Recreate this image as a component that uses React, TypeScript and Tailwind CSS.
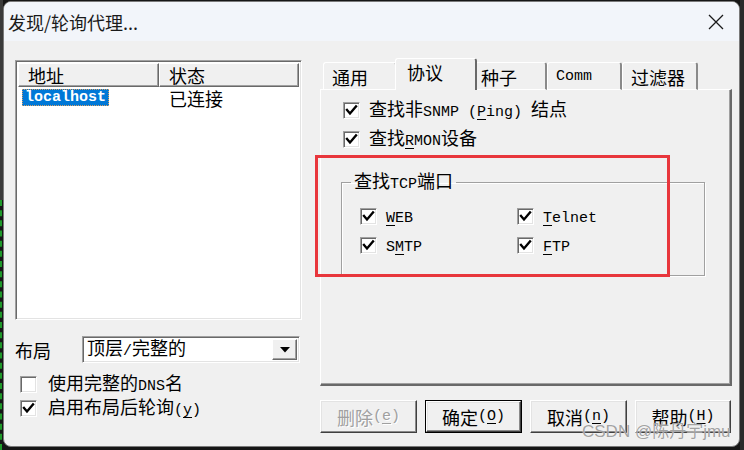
import React from "react";

const cjk = "font-['Noto_Sans_CJK_SC',sans-serif]";
const mono = "font-['Liberation_Mono',monospace] text-[15px]";

const raised =
  "border border-t-white border-l-white border-r-[#696969] border-b-[#696969] shadow-[inset_-1px_-1px_0_#a0a0a0]";
const sunken =
  "border border-t-[#a0a0a0] border-l-[#a0a0a0] border-r-white border-b-white shadow-[inset_1px_1px_0_#696969,inset_-1px_-1px_0_#e3e3e3]";

function M({ children }: { children: React.ReactNode }) {
  return <span className={mono}>{children}</span>;
}
function U({ children }: { children: React.ReactNode }) {
  return <span className="underline underline-offset-[3px] decoration-1">{children}</span>;
}

function Check({ checked }: { checked: boolean }) {
  return (
    <div className={`w-[17px] h-[17px] shrink-0 bg-white flex items-center justify-center ${sunken}`}>
      {checked && (
        <svg width="13" height="13" viewBox="0 0 13 13">
          <polyline points="2,6 5,9.5 11,2.5" fill="none" stroke="#000" strokeWidth="2.4" strokeLinecap="square" />
        </svg>
      )}
    </div>
  );
}

function CheckRow({ checked, children, gap = "gap-[9px]" }: { checked: boolean; children: React.ReactNode; gap?: string }) {
  return (
    <div className={`flex items-center h-[17px] ${gap}`}>
      <Check checked={checked} />
      <span className="text-[18px] leading-[20px] text-black whitespace-nowrap">{children}</span>
    </div>
  );
}

function Tab({ label, active, pl = "pl-[8px]" }: { label: React.ReactNode; active?: boolean; pl?: string }) {
  if (active) {
    return (
      <div className="relative z-10 -mx-[2px] w-[82px] h-[32px] bg-[#f0f0f0] border-t border-l border-t-white border-l-white border-r-2 border-r-[#696969] rounded-t-[3px] flex justify-start pl-[11px] pt-[2px] text-[18px] leading-[22px]">
        {label}
      </div>
    );
  }
  return (
    <div className={`h-[28px] bg-[#f0f0f0] border-t border-l border-b border-t-white border-l-white border-b-white border-r-2 border-r-[#8a8a8a] rounded-t-[3px] flex justify-start ${pl} pt-[3px] text-[18px] leading-[22px]`}>
      {label}
    </div>
  );
}

function Btn({ children, def, disabled, w = "w-[97px]" }: { children: React.ReactNode; def?: boolean; disabled?: boolean; w?: string }) {
  const inner = (
    <div
      className={`flex-1 h-full flex items-center justify-center border border-t-white border-l-white border-r-[#404040] border-b-[#404040] shadow-[inset_-1px_-1px_0_#8a8a8a,inset_1px_1px_0_#e3e3e3] text-[18px] leading-[22px] ${
        disabled ? "text-[#a0a0a0] [text-shadow:1px_1px_0_#fff]" : "text-black"
      }`}
    >
      {children}
    </div>
  );
  return <div className={`${w} h-[33px] flex ${def ? "border border-black" : ""}`}>{inner}</div>;
}

export default function App() {
  return (
    <div className={`relative w-[744px] h-[450px] bg-[#161616] flex overflow-hidden ${cjk}`}>
      {/* desktop sliver at left */}
      <div className="w-[3px] h-full flex flex-col">
        <div className="h-[200px] bg-[#3a3a3a]" />
        <div className="flex-1 border-l-2 border-dashed border-[#1f9a2a]" />
      </div>

      {/* window */}
      <div className="mt-[1px] w-[737px] h-[446px] rounded-[8px] border border-[#7a7a7a] bg-[#f0f0f0] flex flex-col overflow-hidden">
        {/* title bar */}
        <div className="h-[39px] shrink-0 bg-[#f2f5fa] flex items-center justify-between">
          <span className="pl-[4px] text-[18px] leading-[22px] text-[#1a1a1a]">发现/轮询代理...</span>
          <div className="w-[46px] h-full flex items-center justify-center">
            <svg width="16" height="16" viewBox="0 0 16 16">
              <path d="M1 1 L15 15 M15 1 L1 15" stroke="#1a1a1a" strokeWidth="1.3" />
            </svg>
          </div>
        </div>

        {/* body */}
        <div className="flex-1 flex text-black">
          {/* left column */}
          <div className="pl-[11px] pt-[19px] w-[298px] shrink-0 flex flex-col">
            <div className={`w-[287px] h-[260px] bg-white p-[2px] flex flex-col ${sunken}`}>
              <div className="flex h-[24px] shrink-0">
                <div className={`w-[141px] bg-[#f0f0f0] pl-[9px] text-[18px] leading-[22px] ${raised}`}>地址</div>
                <div className={`flex-1 bg-[#f0f0f0] pl-[9px] text-[18px] leading-[22px] ${raised}`}>状态</div>
              </div>
              <div className="flex h-[19px] mt-[1px] items-center">
                <div className="w-[141px] pl-[4px] flex">
                  <span className={`${mono} font-bold leading-[15px] bg-[#0078d7] text-white px-[2px] border border-dotted border-[#d9a066]`}>
                    localhost
                  </span>
                </div>
                <div className="pl-[10px] text-[18px] leading-[20px]">已连接</div>
              </div>
            </div>

            <div className="mt-[16px] h-[27px] flex items-center">
              <span className="w-[67px] text-[18px] leading-[22px]">布局</span>
              <div className={`w-[218px] h-[27px] bg-white flex items-center p-[2px] ${sunken}`}>
                <span className="flex-1 pl-[2px] text-[18px] leading-[22px]">
                  顶层<M>/</M>完整的
                </span>
                <div className={`w-[25px] h-full bg-[#f0f0f0] flex items-center justify-center ${raised}`}>
                  <svg width="10" height="6" viewBox="0 0 10 6">
                    <path d="M0 0 L10 0 L5 5.5 Z" fill="#000" />
                  </svg>
                </div>
              </div>
            </div>

            <div className="mt-[13px] pl-[5px] flex flex-col gap-[7px]">
              <CheckRow checked={false} gap="gap-[11px]">
                使用完整的<M>DNS</M>名
              </CheckRow>
              <CheckRow checked={true} gap="gap-[11px]">
                启用布局后轮询<M>(<U>y</U>)</M>
              </CheckRow>
            </div>
          </div>

          {/* right column */}
          <div className="ml-[18px] pt-[17px] w-[412px] shrink-0 flex flex-col">
            <div className="relative z-10 h-[32px] -mb-[1px] flex items-end pl-[3px]">
              <div className="w-[74px]">
                <Tab label="通用" />
              </div>
              <Tab label="协议" active />
              <div className="w-[72px]">
                <Tab label="种子" pl="pl-[5px]" />
              </div>
              <div className="w-[75px]">
                <Tab label={<span className="text-[15px] font-['Liberation_Mono',monospace] leading-[22px]">Comm</span>} />
              </div>
              <div className="w-[76px]">
                <Tab label="过滤器" />
              </div>
            </div>

            <div className="h-[297px] border-t border-l border-t-white border-l-white border-r-2 border-b-2 border-r-[#696969] border-b-[#696969] shadow-[inset_-1px_-1px_0_#a0a0a0] pt-[12px] pl-[20px] flex flex-col">
              <div className="ml-[2px] flex flex-col gap-[12px]">
                <CheckRow checked>
                  查找非<M>SNMP (<U>P</U>ing) </M>结点
                </CheckRow>
                <CheckRow checked>
                  查找<M>
                    <U>R</U>MON
                  </M>
                  设备
                </CheckRow>
              </div>

              <fieldset className="mt-[20px] w-[364px] border border-[#a0a0a0] shadow-[inset_1px_1px_0_#fff,1px_1px_0_#fff] px-0 pb-[21px]">
                <legend className="ml-[9px] px-[3px] text-[18px] leading-[24px]">
                  查找<M>TCP</M>端口
                </legend>
                <div className="pt-[11px] pl-[18px] grid grid-cols-[157px_1fr] gap-y-[12px]">
                  <CheckRow checked>
                    <M>
                      <U>W</U>EB
                    </M>
                  </CheckRow>
                  <CheckRow checked>
                    <M>
                      <U>T</U>elnet
                    </M>
                  </CheckRow>
                  <CheckRow checked>
                    <M>
                      S<U>M</U>TP
                    </M>
                  </CheckRow>
                  <CheckRow checked>
                    <M>
                      <U>F</U>TP
                    </M>
                  </CheckRow>
                </div>
              </fieldset>
            </div>

            <div className="mt-[14px] flex gap-[8px]">
              <Btn disabled>
                删除<M>(<U>e</U>)</M>
              </Btn>
              <Btn def>
                确定<M>(<U>O</U>)</M>
              </Btn>
              <Btn>
                取消<M>(<U>n</U>)</M>
              </Btn>
              <Btn w="w-[96px]">
                帮助<M>(<U>H</U>)</M>
              </Btn>
            </div>
          </div>
        </div>
      </div>

      <div className="w-[4px] h-full bg-[#2a2a2a]" />

      {/* annotation */}
      <div className="absolute left-[315px] top-[155px] w-[355px] h-[122px] border-[3px] border-[#e8363c] pointer-events-none" />

      {/* watermark */}
      <div className="absolute left-[582px] top-[420px] text-[17px] leading-[20px] font-['Liberation_Sans',sans-serif] text-[#8a8a8a]/80 whitespace-nowrap [text-shadow:0_0_1px_#fff]">
        CSDN @<span className={cjk}>陈丹宇</span>jmu
      </div>
    </div>
  );
}
